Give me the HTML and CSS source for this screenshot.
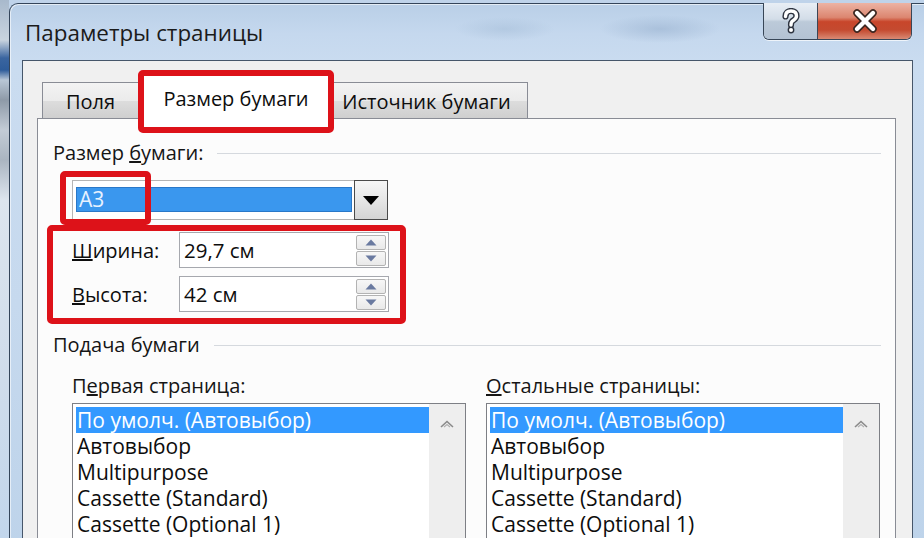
FILE: index.html
```html
<!DOCTYPE html>
<html lang="ru">
<head>
<meta charset="utf-8">
<title>Параметры страницы</title>
<link rel="stylesheet" href="styles.css">
</head>
<body>
<div class="desk">
  <div class="bg-strip"></div>
  <div class="window">
    <div class="titlebar">
      <div class="title">Параметры страницы</div>
      <div class="caption-btns">
        <div class="cbtn help">
          <svg width="20" height="26" viewBox="0 0 20 26">
            <path d="M4.5 8.5 C4.5 4.5 7 3 10 3 C13.5 3 15.5 5 15.5 8 C15.5 11 12.5 12 11 13.5 C10 14.5 10 15.5 10 17" fill="none" stroke="#2e3440" stroke-width="6.2" stroke-linecap="round"/>
            <circle cx="10" cy="22" r="3.4" fill="#2e3440"/>
            <path d="M4.5 8.5 C4.5 4.5 7 3 10 3 C13.5 3 15.5 5 15.5 8 C15.5 11 12.5 12 11 13.5 C10 14.5 10 15.5 10 17" fill="none" stroke="#ffffff" stroke-width="3.4" stroke-linecap="round"/>
            <circle cx="10" cy="22" r="2" fill="#ffffff"/>
          </svg>
        </div>
        <div class="cbtn close">
          <svg width="28" height="24" viewBox="0 0 28 24">
            <path d="M6 4 L22 20 M22 4 L6 20" fill="none" stroke="#3a2620" stroke-width="7.5" stroke-linecap="round"/>
            <path d="M6 4 L22 20 M22 4 L6 20" fill="none" stroke="#ffffff" stroke-width="4.4" stroke-linecap="round"/>
          </svg>
        </div>
      </div>
    </div>
    <div class="client">
      <div class="tabs">
        <div class="tab tab-fields">Поля</div>
        <div class="tab active">Размер бумаги</div>
        <div class="tab tab-source">Источник бумаги</div>
      </div>
      <div class="panel">
        <div class="group-head first"><span>Размер <u>б</u>умаги:</span><i class="rule"></i></div>
        <div class="combo-row">
          <div class="combo">
            <div class="combo-field"><span class="combo-sel">A3</span></div>
            <div class="combo-btn">
              <svg width="16" height="9" viewBox="0 0 16 9"><path d="M0 0 H16 L8 9 Z" fill="#000"/></svg>
            </div>
          </div>
          <div class="mark mark-a3"></div>
        </div>
        <div class="dims">
          <div class="dim-row">
            <span class="dim-label"><u>Ш</u>ирина:</span>
            <div class="spin">
              <span class="spin-val">29,7 см</span>
              <div class="spin-btns">
                <div class="sbtn"><svg width="12" height="7" viewBox="0 0 12 7"><path d="M6 0.5 L11.5 6.5 H0.5 Z" fill="#6a7aa0"/></svg></div>
                <div class="sbtn"><svg width="12" height="7" viewBox="0 0 12 7"><path d="M0.5 0.5 H11.5 L6 6.5 Z" fill="#6a7aa0"/></svg></div>
              </div>
            </div>
          </div>
          <div class="dim-row">
            <span class="dim-label"><u>В</u>ысота:</span>
            <div class="spin">
              <span class="spin-val">42 см</span>
              <div class="spin-btns">
                <div class="sbtn"><svg width="12" height="7" viewBox="0 0 12 7"><path d="M6 0.5 L11.5 6.5 H0.5 Z" fill="#6a7aa0"/></svg></div>
                <div class="sbtn"><svg width="12" height="7" viewBox="0 0 12 7"><path d="M0.5 0.5 H11.5 L6 6.5 Z" fill="#6a7aa0"/></svg></div>
              </div>
            </div>
          </div>
        </div>
        <div class="group-head second"><span>Подача бумаги</span><i class="rule"></i></div>
        <div class="lists">
          <div class="list-col">
            <div class="list-label">П<u>е</u>рвая страница:</div>
            <div class="listbox">
              <div class="items">
                <div class="item selected">По умолч. (Автовыбор)</div>
                <div class="item">Автовыбор</div>
                <div class="item">Multipurpose</div>
                <div class="item">Cassette (Standard)</div>
                <div class="item">Cassette (Optional 1)</div>
              </div>
              <div class="scroll">
                <svg width="14" height="8" viewBox="0 0 14 8"><path d="M1 7 L7 1.5 L13 7" fill="none" stroke="#8a8a8a" stroke-width="1.6"/><path d="M4 7 L7 4.5 L10 7" fill="none" stroke="#b0b0b0" stroke-width="1.2"/></svg>
              </div>
            </div>
          </div>
          <div class="list-col">
            <div class="list-label"><u>О</u>стальные страницы:</div>
            <div class="listbox">
              <div class="items">
                <div class="item selected">По умолч. (Автовыбор)</div>
                <div class="item">Автовыбор</div>
                <div class="item">Multipurpose</div>
                <div class="item">Cassette (Standard)</div>
                <div class="item">Cassette (Optional 1)</div>
              </div>
              <div class="scroll">
                <svg width="14" height="8" viewBox="0 0 14 8"><path d="M1 7 L7 1.5 L13 7" fill="none" stroke="#8a8a8a" stroke-width="1.6"/><path d="M4 7 L7 4.5 L10 7" fill="none" stroke="#b0b0b0" stroke-width="1.2"/></svg>
              </div>
            </div>
          </div>
        </div>
      </div>
    </div>
  </div>
</div>
</body>
</html>
```

FILE: styles.css
```css
* { box-sizing: border-box; }

html, body {
  margin: 0;
  padding: 0;
}

body {
  width: 924px;
  height: 538px;
  overflow: hidden;
  background: #bfd3ea;
  font-family: "Open Sans", "Noto Sans", "DejaVu Sans", sans-serif;
  font-size: 20px;
  color: #0d0d0d;
}

.desk {
  display: flex;
  height: 538px;
}

.bg-strip {
  flex: none;
  width: 9px;
  background: linear-gradient(to bottom,
    #a8b9cc 0px, #c9d4df 40px, #3a65a0 58px, #2e5c9a 70px,
    #b9c7d6 80px, #8e9aa8 100px, #c3ccd6 130px, #aab5c1 160px,
    #dde5ee 200px, #cfdceb 380px, #c2d6ec 538px);
}

.window {
  flex: none;
  width: 916px;
  height: 560px;
  margin-top: 3px;
  border: 1px solid #34455a;
  border-right: none;
  border-bottom: none;
  border-radius: 9px 0 0 0;
  background:
    radial-gradient(ellipse 60px 14px at 650px 25px, rgba(150,175,205,0.55), rgba(150,175,205,0) 100%),
    radial-gradient(ellipse 50px 12px at 495px 25px, rgba(160,185,212,0.45), rgba(160,185,212,0) 100%),
    linear-gradient(to bottom, #b9cfe7 0px, #c5d8ee 30px, #cadcf0 60px, #c6d9ee 300px, #bdd3ea 560px);
  box-shadow: inset 1px 1px 0 rgba(255,255,255,0.6);
  display: flex;
  flex-direction: column;
}

.titlebar {
  flex: none;
  height: 56px;
  display: flex;
  align-items: flex-start;
  padding: 0 13px 0 15px;
}

.title {
  line-height: 58px;
  font-size: 22.4px;
  color: #1b1b1b;
}

.caption-btns {
  margin-left: auto;
  margin-top: -1px;
  display: flex;
  height: 37px;
  border: 1px solid #384657;
  border-top: none;
  border-radius: 0 0 6px 6px;
  overflow: hidden;
  box-shadow: 0 1px 0 rgba(255,255,255,0.7);
}

.cbtn {
  display: flex;
  align-items: center;
  justify-content: center;
  height: 100%;
}

.help {
  width: 54px;
  border-right: 1px solid #3c4656;
  background: linear-gradient(to bottom, #e8eef5 0%, #d3dde8 45%, #bccad9 52%, #b3c2d3 100%);
}

.close {
  width: 93px;
  background: linear-gradient(to bottom, #ecb3a4 0%, #dc8670 40%, #c8462b 52%, #c44a30 75%, #d98a74 100%);
}

.client {
  flex: 1;
  margin: 0 12px;
  border: 1px solid #46566a;
  border-bottom: none;
  background: #f0f0f0;
  padding: 0 16px 0 14px;
  display: flex;
  flex-direction: column;
}

.tabs {
  flex: none;
  height: 57px;
  display: flex;
  align-items: flex-end;
  padding-left: 5px;
}

.tab {
  height: 36px;
  display: flex;
  align-items: center;
  justify-content: center;
  padding-top: 2px;
  border: 1px solid #898c95;
  border-bottom: none;
  background: linear-gradient(to bottom, #f3f3f3 0%, #ebebeb 50%, #dddddd 51%, #cfcfcf 100%);
  white-space: nowrap;
}

.tab-fields {
  width: 96px;
  border-right: none;
}

.tab-source {
  width: 194px;
  padding-right: 8px;
  border-left: none;
}

.tab.active {
  position: relative;
  z-index: 2;
  width: 196px;
  height: 63px;
  margin-bottom: -15px;
  padding-top: 0;
  padding-bottom: 6px;
  border: 6px solid #dd1219;
  border-radius: 5px;
  background: #ffffff;
}

.panel {
  flex: 1;
  border: 1px solid #898c95;
  border-bottom: none;
  background: #fcfcfc;
  padding: 0 14px 0 15px;
}

.group-head {
  display: flex;
  align-items: center;
  line-height: 26px;
  color: #151515;
}

.group-head.first { margin-top: 21px; }
.group-head.second { margin-top: 8px; }

.rule {
  flex: 1;
  height: 1px;
  margin-left: 14px;
  background: #d5d9de;
}

.combo-row {
  position: relative;
  margin: 14px 0 0 19px;
  width: 316px;
}

.combo {
  display: flex;
  height: 40px;
  border: 1px solid #b5b5b5;
  background: #ffffff;
}

.combo-field {
  flex: 1;
  padding: 6px 2px 7px 3px;
  display: flex;
}

.combo-sel {
  flex: 1;
  background: #3a97ee;
  border: 1px solid #2a78c8;
  color: #e8f2ff;
  font-size: 21px;
  line-height: 22px;
  padding-left: 2px;
}

.combo-btn {
  width: 34px;
  margin: -1px -1px -1px 0;
  border: 1px solid #4a4a4a;
  background: linear-gradient(to bottom, #f6f6f6 0%, #e6e6e6 50%, #d4d4d4 100%);
  display: flex;
  align-items: center;
  justify-content: center;
}

.mark {
  position: absolute;
  border: 6px solid #dd1219;
  border-radius: 5px;
}

.mark-a3 {
  left: -12px;
  top: -9px;
  width: 91px;
  height: 54px;
}

.dims {
  width: 359px;
  margin: 5px 0 0 -6px;
  border: 6px solid #dd1219;
  border-radius: 5px;
  padding: 1px 11px 6px 19px;
  display: flex;
  flex-direction: column;
  gap: 8px;
}

.dim-row {
  display: flex;
  align-items: center;
}

.dim-label {
  width: 107px;
  flex: none;
}

.spin {
  flex: 1;
  height: 36px;
  border: 1px solid #a6a8ae;
  background: #ffffff;
  display: flex;
  align-items: center;
  padding: 0 2px 0 4px;
}

.spin-val {
  flex: 1;
  font-size: 20.5px;
}

.spin-btns {
  width: 30px;
  display: flex;
  flex-direction: column;
  gap: 1px;
}

.sbtn {
  height: 15px;
  border: 1px solid #b3b3b3;
  border-radius: 2px;
  background: linear-gradient(to bottom, #f7f7f7 0%, #e9e9e9 100%);
  display: flex;
  align-items: center;
  justify-content: center;
}

.lists {
  display: flex;
  gap: 20px;
  margin: 15px 0 0 19px;
}

.list-col {
  width: 394px;
  flex: none;
}

.list-label {
  line-height: 26px;
  color: #151515;
}

.listbox {
  margin-top: 4px;
  height: 160px;
  border: 1px solid #7d7f85;
  background: #ffffff;
  display: flex;
}

.items {
  flex: 1;
  padding: 3px 0 0 3px;
}

.item {
  height: 26px;
  line-height: 26px;
  padding-left: 1px;
  white-space: nowrap;
  font-size: 21px;
}

.item.selected {
  background: #3399ff;
  color: #ffffff;
}

.scroll {
  width: 36px;
  flex: none;
  background: #eeeeee;
  display: flex;
  justify-content: center;
  align-items: flex-start;
  padding-top: 16px;
}
```
